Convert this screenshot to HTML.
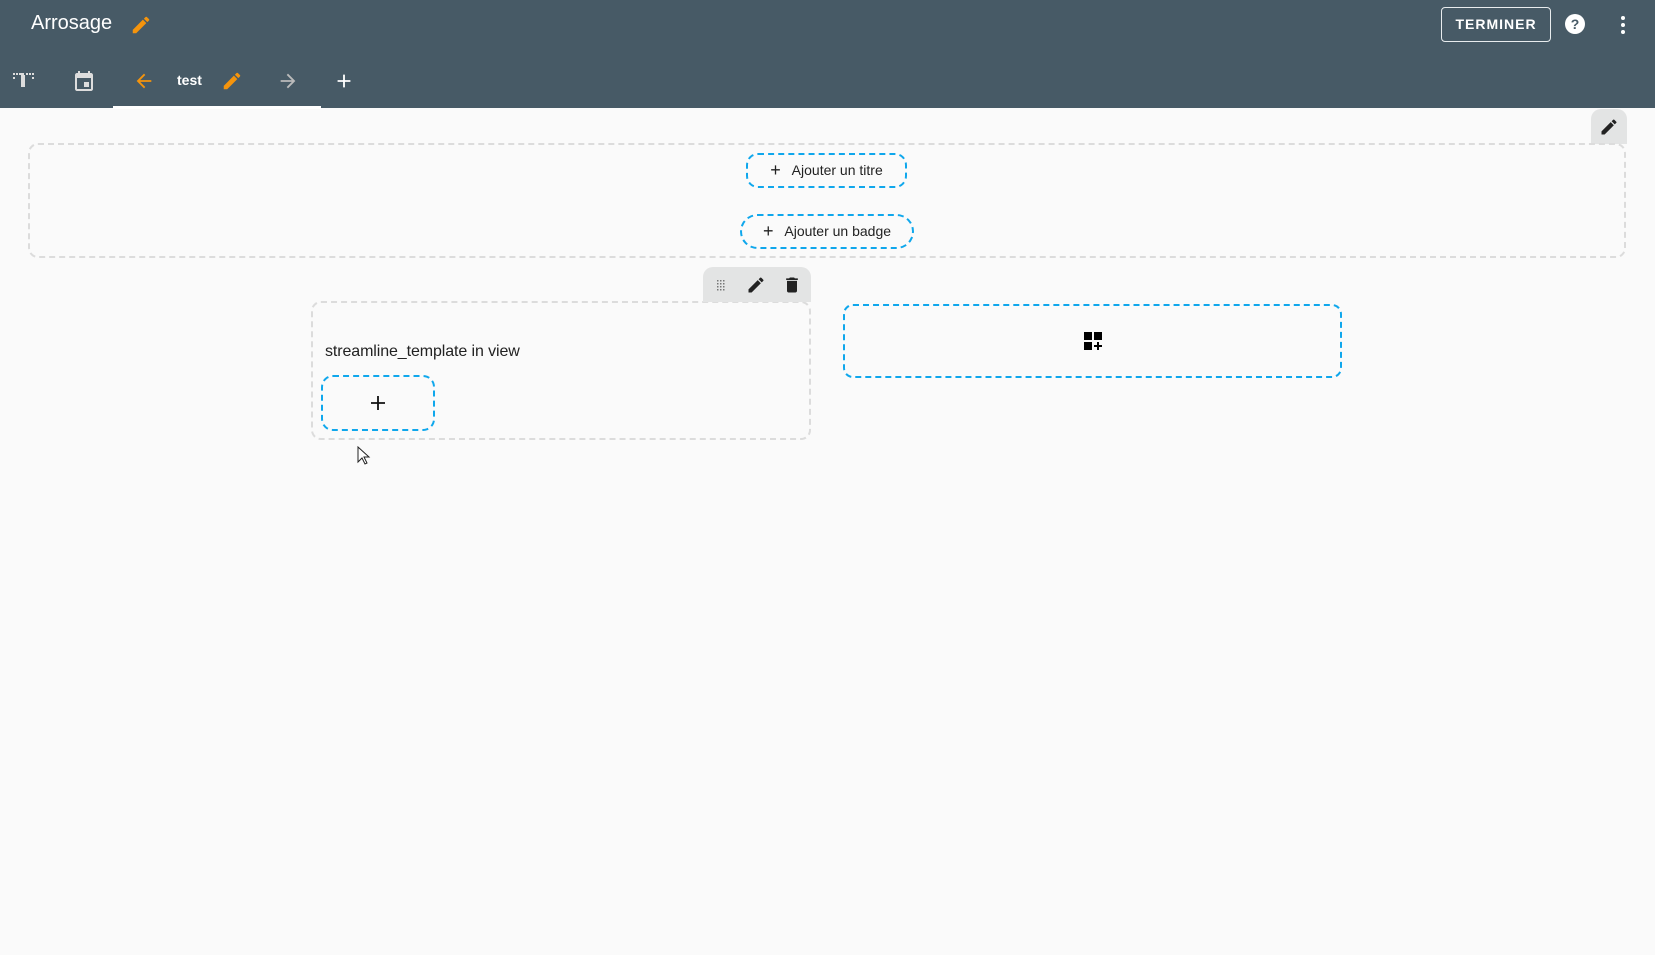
<!DOCTYPE html><html><head><style>
body{margin:0;width:1655px;height:955px;background:#fafafa;font-family:"Liberation Sans",sans-serif;position:relative;overflow:hidden}
.a{position:absolute}
.hdr{left:0;top:0;width:1655px;height:108px;background:#475a66}
.dash{border:2px dashed #0fa7ec;box-sizing:border-box}
.gd{border:2px dashed #dcdcdc;box-sizing:border-box}
.pl{font-size:18px;vertical-align:-1px}
</style></head><body>
<div class="a hdr"></div>
<div class="a" style="left:31px;top:12px;font-size:20px;color:#fff">Arrosage</div>
<svg class="a" style="left:130px;top:14px" width="22" height="22" viewBox="0 0 24 24"><path fill="#f5940c" d="M3 17.25V21h3.75L17.81 9.94l-3.75-3.75L3 17.25zM20.71 7.04a1 1 0 000-1.41l-2.34-2.34a1 1 0 00-1.41 0l-1.83 1.83 3.75 3.75 1.83-1.83z"/></svg>
<div class="a" style="left:1441px;top:7px;width:110px;height:35px;border:1px solid #e8ecee;border-radius:4px;box-sizing:border-box;color:#fff;font-weight:bold;font-size:14px;letter-spacing:1px;text-align:center;line-height:33px">TERMINER</div>
<svg class="a" style="left:1563px;top:12px" width="24" height="24" viewBox="0 0 24 24"><circle cx="12" cy="12" r="10" fill="#fff"/><text x="12" y="17" text-anchor="middle" font-size="14" font-weight="bold" fill="#475a66" font-family="Liberation Sans">?</text></svg>
<svg class="a" style="left:1617px;top:14px" width="12" height="22"><circle cx="6" cy="4" r="2" fill="#fff"/><circle cx="6" cy="11" r="2" fill="#fff"/><circle cx="6" cy="18" r="2" fill="#fff"/></svg>
<svg class="a" style="left:13px;top:73px" width="24" height="16"><g fill="#ddd"><rect x="0" y="0" width="2" height="2"/><rect x="3" y="0" width="2" height="2"/><rect x="6" y="0" width="5" height="2"/><rect x="13" y="0" width="2" height="2"/><rect x="16" y="0" width="2" height="2"/><rect x="19" y="0" width="2" height="2"/><rect x="0" y="4" width="2" height="2"/><rect x="19" y="4" width="2" height="2"/><rect x="8" y="2" width="4" height="12"/></g></svg>
<svg class="a" style="left:72px;top:69px" width="24" height="24" viewBox="0 0 24 24"><path fill="#ddd" d="M19 4h-1V2h-2v2H8V2H6v2H5c-1.1 0-2 .9-2 2v14c0 1.1.9 2 2 2h14c1.1 0 2-.9 2-2V6c0-1.1-.9-2-2-2zm0 16H5V9h14v11zM12 13h5v5h-5z"/></svg>
<svg class="a" style="left:133px;top:70px" width="22" height="22" viewBox="0 0 24 24"><path fill="#f5940c" d="M20 11H7.83l5.59-5.59L12 4l-8 8 8 8 1.41-1.41L7.83 13H20v-2z"/></svg>
<div class="a" style="left:177px;top:72px;font-size:14px;font-weight:bold;color:#fff">test</div>
<svg class="a" style="left:221px;top:70px" width="22" height="22" viewBox="0 0 24 24"><path fill="#f5940c" d="M3 17.25V21h3.75L17.81 9.94l-3.75-3.75L3 17.25zM20.71 7.04a1 1 0 000-1.41l-2.34-2.34a1 1 0 00-1.41 0l-1.83 1.83 3.75 3.75 1.83-1.83z"/></svg>
<svg class="a" style="left:277px;top:70px" width="22" height="22" viewBox="0 0 24 24"><path fill="#bbb" d="M12 4l-1.41 1.41L16.17 11H4v2h12.17l-5.58 5.59L12 20l8-8z"/></svg>
<svg class="a" style="left:333px;top:70px" width="22" height="22" viewBox="0 0 24 24"><path fill="#fff" d="M19 13h-6v6h-2v-6H5v-2h6V5h2v6h6v2z"/></svg>
<div class="a" style="left:113px;top:106px;width:208px;height:3px;background:#fff"></div>
<div class="a" style="left:1591px;top:109px;width:36px;height:35px;background:#e3e4e4;border-radius:10px 10px 0 0"></div>
<svg class="a" style="left:1599px;top:117px" width="20" height="20" viewBox="0 0 24 24"><path fill="#222" d="M3 17.25V21h3.75L17.81 9.94l-3.75-3.75L3 17.25zM20.71 7.04a1 1 0 000-1.41l-2.34-2.34a1 1 0 00-1.41 0l-1.83 1.83 3.75 3.75 1.83-1.83z"/></svg>
<div class="a gd" style="left:28px;top:143px;width:1598px;height:115px;border-radius:10px"></div>
<div class="a dash" style="left:746px;top:153px;width:161px;height:35px;border-radius:12px;font-size:14px;color:#222;text-align:center;line-height:31px"><span class="pl">+</span>&nbsp;&nbsp; Ajouter un titre</div>
<div class="a dash" style="left:740px;top:214px;width:174px;height:35px;border-radius:18px;font-size:14px;color:#222;text-align:center;line-height:31px"><span class="pl">+</span>&nbsp;&nbsp; Ajouter un badge</div>
<div class="a gd" style="left:311px;top:301px;width:500px;height:139px;border-radius:10px"></div>
<div class="a" style="left:703px;top:267px;width:108px;height:35px;background:#e3e4e4;border-radius:10px 10px 0 0"></div>
<svg class="a" style="left:716px;top:279px" width="12" height="14"><g fill="#777"><rect x="1" y="1" width="1.5" height="1.5"/><rect x="4" y="1" width="1.5" height="1.5"/><rect x="7" y="1" width="1.5" height="1.5"/><rect x="1" y="4" width="1.5" height="1.5"/><rect x="4" y="4" width="1.5" height="1.5"/><rect x="7" y="4" width="1.5" height="1.5"/><rect x="1" y="7" width="1.5" height="1.5"/><rect x="4" y="7" width="1.5" height="1.5"/><rect x="7" y="7" width="1.5" height="1.5"/><rect x="1" y="10" width="1.5" height="1.5"/><rect x="4" y="10" width="1.5" height="1.5"/><rect x="7" y="10" width="1.5" height="1.5"/></g></svg>
<svg class="a" style="left:746px;top:275px" width="20" height="20" viewBox="0 0 24 24"><path fill="#222" d="M3 17.25V21h3.75L17.81 9.94l-3.75-3.75L3 17.25zM20.71 7.04a1 1 0 000-1.41l-2.34-2.34a1 1 0 00-1.41 0l-1.83 1.83 3.75 3.75 1.83-1.83z"/></svg>
<svg class="a" style="left:782px;top:275px" width="20" height="20" viewBox="0 0 24 24"><path fill="#222" d="M6 19c0 1.1.9 2 2 2h8c1.1 0 2-.9 2-2V7H6v12zM19 4h-3.5l-1-1h-5l-1 1H5v2h14V4z"/></svg>
<div class="a" style="left:325px;top:343px;font-size:16px;color:#222;letter-spacing:-0.1px">streamline_template in view</div>
<div class="a dash" style="left:321px;top:375px;width:114px;height:56px;border-radius:12px"></div>
<svg class="a" style="left:369px;top:394px" width="18" height="18" viewBox="0 0 18 18"><path d="M9 2v14M2 9h14" stroke="#111" stroke-width="1.8"/></svg>
<svg class="a" style="left:357px;top:446px" width="14" height="20" viewBox="0 0 14 20"><path d="M1 1v15l4-4 3 6 2-1-3-6h5z" fill="#fff" stroke="#222" stroke-width="1"/></svg>
<div class="a dash" style="left:843px;top:304px;width:499px;height:74px;border-radius:10px"></div>
<svg class="a" style="left:1084px;top:332px" width="19" height="19"><g fill="#000"><rect x="0" y="0" width="8" height="8"/><rect x="10" y="0" width="8" height="8"/><rect x="0" y="10" width="8" height="8"/><rect x="13" y="10" width="2" height="8"/><rect x="10" y="13" width="8" height="2"/></g></svg>
</body></html>
